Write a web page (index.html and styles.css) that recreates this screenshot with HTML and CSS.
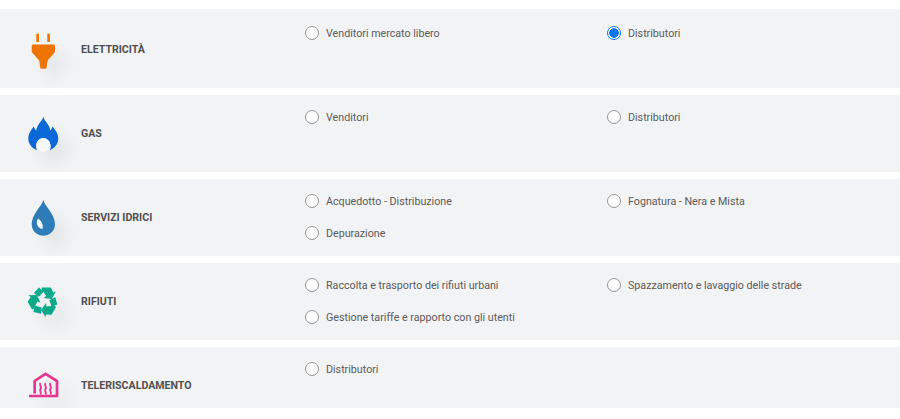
FILE: index.html
```
<!DOCTYPE html>
<html lang="it">
<head>
<meta charset="utf-8">
<title>Settori</title>
<link rel="stylesheet" href="styles.css">
</head>
<body>
<main class="sectors">
  <section class="row row-first">
    <div class="head">
      <svg class="icon" viewBox="0 0 41 41"><path fill="#ef7402" d="M13.300 4.700h2.700V13h-2.700zM24.300 4.700H27V13h-2.700zM10 15.600h20.700q1.300 0 1.300 1.300V22q0 1.200-.8 2l-5.700 6.600q-1 1-1.200 2.600l-.7 5.300q-.1 1.200-1.300 1.200h-3.800q-1.200 0-1.300-1.200l-.7-5.300q-.2-1.600-1.200-2.600L9.500 24q-.8-.8-.8-2v-5.100q0-1.300 1.300-1.300z"/></svg>
      <span class="label">ELETTRICITÀ</span>
    </div>
    <div class="options">
      <label class="opt"><input type="radio" name="s1"><span>Venditori mercato libero</span></label>
      <label class="opt"><input type="radio" name="s1" checked><span>Distributori</span></label>
    </div>
  </section>
  <section class="row">
    <div class="head">
      <svg class="icon" viewBox="0 0 41 41"><path fill="#0a68d8" d="M20.300 3.500C21 8 26.500 11 27.300 17.500 28 16.500 29.200 15 29.500 13.500 32.500 17 35.500 21 35.300 26 35 31.500 31 35.500 26.500 37.300 28 35.500 28 33.500 27.500 31.500 26.500 28 23.500 25.300 20.300 25.300 17 25.300 14 28 13.300 31.500 12.800 33.500 13 35.500 14.300 37.300 9.500 35.500 5.500 31.500 5.300 26 5.100 21 8 17 10.800 13.500 11.200 15 12.300 16.500 13.300 17.500 14 11 19.500 8 20.300 3.500Z"/><circle cx="20.300" cy="32" r="7" fill="#f7f8f9"/></svg>
      <span class="label">GAS</span>
    </div>
    <div class="options">
      <label class="opt"><input type="radio" name="s2"><span>Venditori</span></label>
      <label class="opt"><input type="radio" name="s2"><span>Distributori</span></label>
    </div>
  </section>
  <section class="row">
    <div class="head">
      <svg class="icon" viewBox="0 0 41 41"><path fill="#2f7db8" d="M20.300 3C21.500 9 32 17 32 27.200 32 33.500 27 38.700 20.300 38.700 13.700 38.700 8.700 33.500 8.700 27.200 8.700 17 19 9 20.300 3Z"/><path fill="#f7f8f9" d="M15 21.500C12.500 26 14 31 19.500 32 20.500 27.500 18.500 24 15 21.500Z"/></svg>
      <span class="label">SERVIZI IDRICI</span>
    </div>
    <div class="options">
      <label class="opt"><input type="radio" name="s3"><span>Acquedotto - Distribuzione</span></label>
      <label class="opt"><input type="radio" name="s3"><span>Fognatura - Nera e Mista</span></label>
      <label class="opt"><input type="radio" name="s3"><span>Depurazione</span></label>
    </div>
  </section>
  <section class="row">
    <div class="head">
      <svg class="icon" viewBox="0 0 41 41">
        <defs>
          <g id="recycle-arm">
            <path d="M10.800 12 16 6.500l4.800 4-4.800 5.200z"/>
            <path d="M18.800 6.500h9l2.600 5 2.600-1.200-4.200 7.700-8.300-1 2.700-1.900-4.400-6.400z"/>
          </g>
        </defs>
        <g fill="#0aa98a">
          <use href="#recycle-arm"/>
          <use href="#recycle-arm" transform="rotate(120 20.300 20.300)"/>
          <use href="#recycle-arm" transform="rotate(240 20.300 20.300)"/>
        </g>
      </svg>
      <span class="label">RIFIUTI</span>
    </div>
    <div class="options">
      <label class="opt"><input type="radio" name="s4"><span>Raccolta e trasporto dei rifiuti urbani</span></label>
      <label class="opt"><input type="radio" name="s4"><span>Spazzamento e lavaggio delle strade</span></label>
      <label class="opt"><input type="radio" name="s4"><span>Gestione tariffe e rapporto con gli utenti</span></label>
    </div>
  </section>
  <section class="row">
    <div class="head">
      <svg class="icon" viewBox="0 0 41 41">
        <g fill="none" stroke="#e8358f">
          <path stroke-width="2.700" d="M11.700 28.500V16L22.500 8.800 34 16V31H6"/>
          <path stroke-width="1.900" d="M17.500 18c-1.800 2 1.800 4 0 6-1.800 2 1.800 3 0 5.500M22.500 18c-1.800 2 1.800 4 0 6-1.800 2 1.800 3 0 5.500M27.500 18c-1.800 2 1.800 4 0 6-1.800 2 1.800 3 0 5.500"/>
        </g>
      </svg>
      <span class="label">TELERISCALDAMENTO</span>
    </div>
    <div class="options">
      <label class="opt"><input type="radio" name="s5"><span>Distributori</span></label>
    </div>
  </section>
</main>
</body>
</html>
```
FILE: styles.css
```
* { box-sizing: border-box; }
html, body { margin: 0; padding: 0; background: #fff; }
body { font-family: Roboto, "Liberation Sans", sans-serif; overflow: hidden; }
.sectors {
  margin-top: 9px;
  height: 399px;
  overflow: hidden;
  display: flex;
  flex-direction: column;
  gap: 7px;
}
.row {
  flex: 0 0 auto;
  height: 77px;
  display: flex;
  background: #f2f3f5;
}
.row-first { height: 79px; padding-top: 2px; }
.head {
  width: 305px;
  padding-left: 23px;
  display: flex;
  align-items: center;
  gap: 17px;
}
.icon {
  width: 41px;
  height: 41px;
  flex: none;
  overflow: visible;
  filter: drop-shadow(11px 12px 7px rgba(0, 0, 0, .055));
}
.label {
  font-size: 10.600px;
  font-weight: 700;
  color: #505050;
}
.options {
  width: 595px;
  padding-top: 6px;
  display: grid;
  grid-template-columns: 302px 1fr;
  grid-auto-rows: 32px;
  align-content: start;
}
.opt {
  display: flex;
  align-items: center;
  gap: 7px;
  font-size: 10.700px;
  color: #5a5a5a;
}
.opt input {
  appearance: none;
  -webkit-appearance: none;
  margin: 0;
  width: 14px;
  height: 14px;
  flex: none;
  border: 1px solid #949494;
  border-radius: 50%;
  background: #fff;
}
.opt input:checked {
  border-color: #0b76fa;
  background: radial-gradient(circle, #0b76fa 0 4.500px, #fff 5px);
}
```
